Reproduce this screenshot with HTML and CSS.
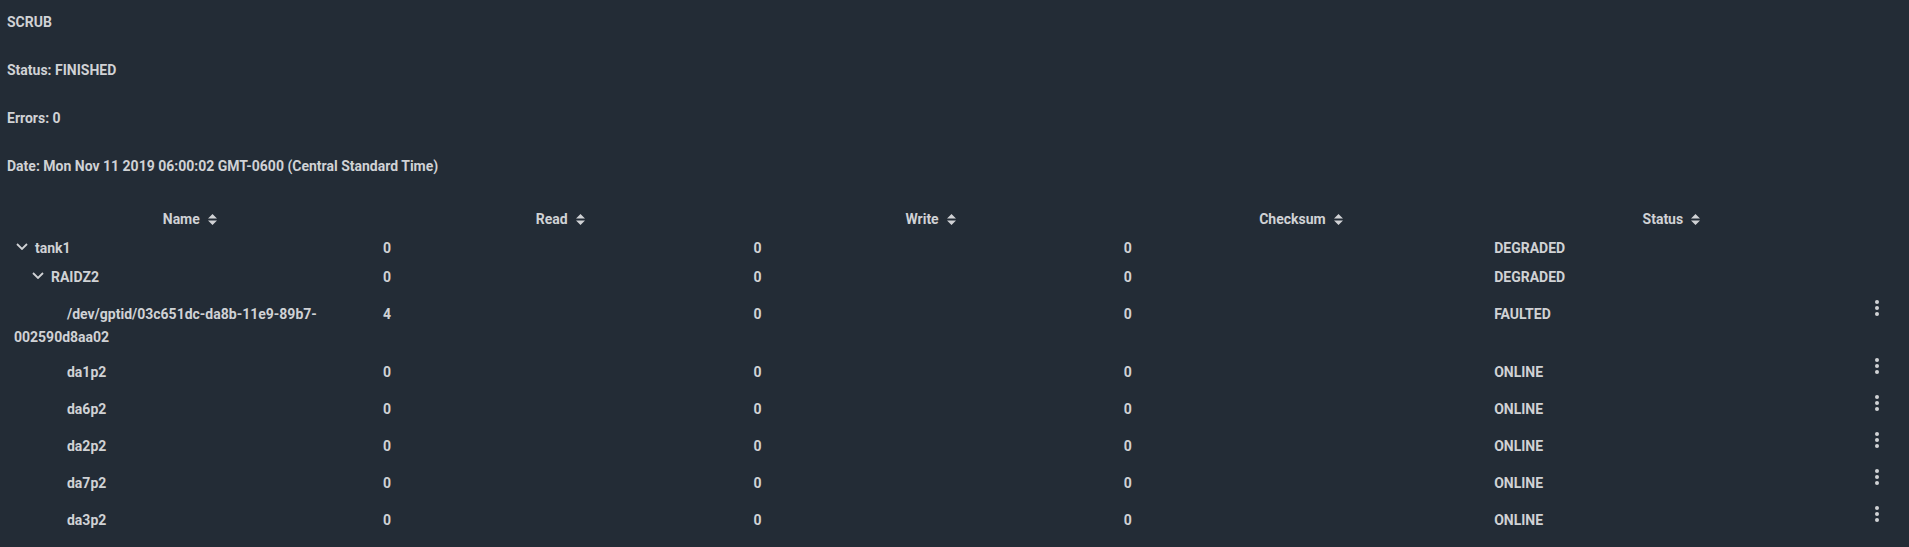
FILE: index.html
```html
<!DOCTYPE html>
<html lang="en">
<head>
<meta charset="utf-8">
<title>Scrub</title>
<link rel="stylesheet" href="styles.css">
</head>
<body>
<div class="page">
  <section class="info">
    <div class="info-line">SCRUB</div>
    <div class="info-line">Status: FINISHED</div>
    <div class="info-line">Errors: 0</div>
    <div class="info-line">Date: Mon Nov 11 2019 06:00:02 GMT-0600 (Central Standard Time)</div>
  </section>

  <div class="table">
    <div class="row head">
      <div class="hcell">Name <svg class="sort" viewBox="0 0 9 11"><path d="M0 4.6 4.5 0 9 4.6Z M0 6.4 4.5 11 9 6.4Z"/></svg></div>
      <div class="hcell">Read <svg class="sort" viewBox="0 0 9 11"><path d="M0 4.6 4.5 0 9 4.6Z M0 6.4 4.5 11 9 6.4Z"/></svg></div>
      <div class="hcell">Write <svg class="sort" viewBox="0 0 9 11"><path d="M0 4.6 4.5 0 9 4.6Z M0 6.4 4.5 11 9 6.4Z"/></svg></div>
      <div class="hcell">Checksum <svg class="sort" viewBox="0 0 9 11"><path d="M0 4.6 4.5 0 9 4.6Z M0 6.4 4.5 11 9 6.4Z"/></svg></div>
      <div class="hcell">Status <svg class="sort" viewBox="0 0 9 11"><path d="M0 4.6 4.5 0 9 4.6Z M0 6.4 4.5 11 9 6.4Z"/></svg></div>
      <div class="hcell"></div>
    </div>

    <div class="row parent">
      <div class="cell name"><span class="toggle"><svg viewBox="0 0 12 7"><polyline points="1,1 6,6 11,1"/></svg></span>tank1</div>
      <div class="cell">0</div>
      <div class="cell">0</div>
      <div class="cell">0</div>
      <div class="cell">DEGRADED</div>
      <div class="cell act"></div>
    </div>

    <div class="row parent">
      <div class="cell name"><span class="ind"></span><span class="toggle"><svg viewBox="0 0 12 7"><polyline points="1,1 6,6 11,1"/></svg></span>RAIDZ2</div>
      <div class="cell">0</div>
      <div class="cell">0</div>
      <div class="cell">0</div>
      <div class="cell">DEGRADED</div>
      <div class="cell act"></div>
    </div>

    <div class="row leaf tall">
      <div class="cell name"><span class="ind ind2"></span><span class="toggle"></span>/dev/gptid/03c651dc-da8b-11e9-89b7-<wbr>002590d8aa02</div>
      <div class="cell">4</div>
      <div class="cell">0</div>
      <div class="cell">0</div>
      <div class="cell">FAULTED</div>
      <div class="cell act"><svg class="kebab" viewBox="0 0 24 24"><circle cx="12" cy="6" r="2"/><circle cx="12" cy="12" r="2"/><circle cx="12" cy="18" r="2"/></svg></div>
    </div>

    <div class="row leaf">
      <div class="cell name"><span class="ind ind2"></span><span class="toggle"></span>da1p2</div>
      <div class="cell">0</div>
      <div class="cell">0</div>
      <div class="cell">0</div>
      <div class="cell">ONLINE</div>
      <div class="cell act"><svg class="kebab" viewBox="0 0 24 24"><circle cx="12" cy="6" r="2"/><circle cx="12" cy="12" r="2"/><circle cx="12" cy="18" r="2"/></svg></div>
    </div>

    <div class="row leaf">
      <div class="cell name"><span class="ind ind2"></span><span class="toggle"></span>da6p2</div>
      <div class="cell">0</div>
      <div class="cell">0</div>
      <div class="cell">0</div>
      <div class="cell">ONLINE</div>
      <div class="cell act"><svg class="kebab" viewBox="0 0 24 24"><circle cx="12" cy="6" r="2"/><circle cx="12" cy="12" r="2"/><circle cx="12" cy="18" r="2"/></svg></div>
    </div>

    <div class="row leaf">
      <div class="cell name"><span class="ind ind2"></span><span class="toggle"></span>da2p2</div>
      <div class="cell">0</div>
      <div class="cell">0</div>
      <div class="cell">0</div>
      <div class="cell">ONLINE</div>
      <div class="cell act"><svg class="kebab" viewBox="0 0 24 24"><circle cx="12" cy="6" r="2"/><circle cx="12" cy="12" r="2"/><circle cx="12" cy="18" r="2"/></svg></div>
    </div>

    <div class="row leaf">
      <div class="cell name"><span class="ind ind2"></span><span class="toggle"></span>da7p2</div>
      <div class="cell">0</div>
      <div class="cell">0</div>
      <div class="cell">0</div>
      <div class="cell">ONLINE</div>
      <div class="cell act"><svg class="kebab" viewBox="0 0 24 24"><circle cx="12" cy="6" r="2"/><circle cx="12" cy="12" r="2"/><circle cx="12" cy="18" r="2"/></svg></div>
    </div>

    <div class="row leaf">
      <div class="cell name"><span class="ind ind2"></span><span class="toggle"></span>da3p2</div>
      <div class="cell">0</div>
      <div class="cell">0</div>
      <div class="cell">0</div>
      <div class="cell">ONLINE</div>
      <div class="cell act"><svg class="kebab" viewBox="0 0 24 24"><circle cx="12" cy="6" r="2"/><circle cx="12" cy="12" r="2"/><circle cx="12" cy="18" r="2"/></svg></div>
    </div>
  </div>
</div>
</body>
</html>
```

FILE: styles.css
```css
html, body {
  margin: 0;
  padding: 0;
  background: #232c36;
}

body {
  font-family: Roboto, "Liberation Sans", Arial, sans-serif;
  font-size: 14px;
  font-weight: 700;
  color: #d0d2d5;
  height: 547px;
  overflow: hidden;
}

.page {
  display: flex;
  flex-direction: column;
}

.info {
  padding-left: 7px;
}

.info-line {
  line-height: 16px;
  padding: 14px 0 18px;
}

.table {
  margin-top: 12px;
  padding-left: 4.6px;
  display: flex;
  flex-direction: column;
}

.row {
  display: grid;
  grid-template-columns: repeat(5, 370.4px) 1fr;
  align-items: start;
}

.row.head {
  height: 30px;
  align-items: center;
}

.hcell {
  display: flex;
  justify-content: center;
  align-items: center;
  gap: 8px;
  line-height: 30px;
}

.sort {
  width: 9px;
  height: 11px;
  fill: #d0d2d5;
}

.cell {
  padding-left: 8px;
  line-height: 23px;
}

.cell.name {
  padding-left: 9.4px;
  padding-right: 8px;
}

.row.parent {
  height: 29px;
}

.row.parent .cell {
  line-height: 29px;
}

.row.leaf {
  height: 37px;
}

.row.leaf .cell {
  padding-top: 7px;
}

.row.leaf.tall {
  height: 62px;
}

.row.leaf.tall .cell {
  padding-top: 11px;
}

.ind {
  display: inline-block;
  width: 16px;
}

.ind.ind2 {
  width: 32px;
}

.toggle {
  display: inline-block;
  width: 21px;
  height: 10px;
  vertical-align: baseline;
}

.toggle svg {
  display: block;
  width: 12px;
  height: 7px;
  margin-left: 2.5px;
  fill: none;
  stroke: #d0d2d5;
  stroke-width: 1.8;
}

.cell.act {
  padding-left: 8.4px;
}

.kebab {
  display: block;
  width: 24px;
  height: 24px;
  margin-top: -7.5px;
  fill: #d0d2d5;
}
```
